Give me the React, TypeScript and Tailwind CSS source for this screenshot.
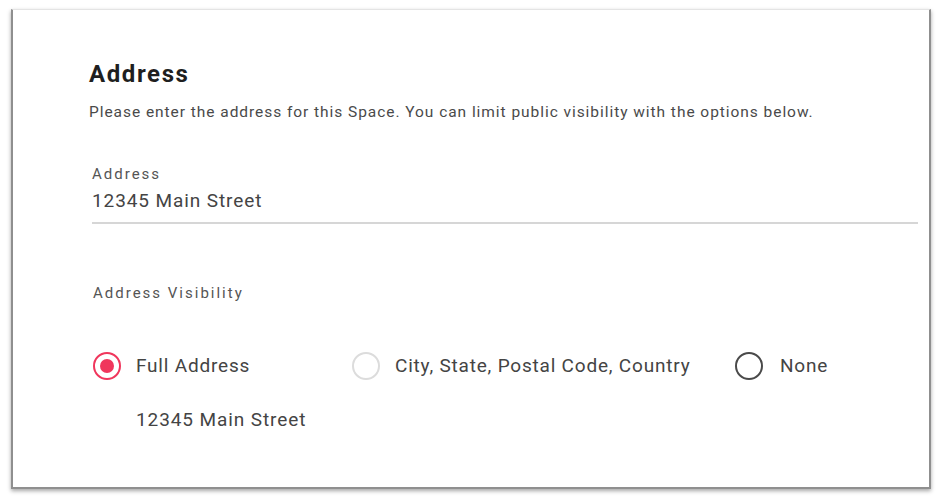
import React from "react";

type Option = { id: string; label: string; state: "checked" | "disabled" | "off" };

const options: Option[] = [
  { id: "full", label: "Full Address", state: "checked" },
  { id: "city", label: "City, State, Postal Code, Country", state: "disabled" },
  { id: "none", label: "None", state: "off" },
];

function Radio({ state }: { state: Option["state"] }) {
  if (state === "checked") {
    return (
      <span className="flex h-[28px] w-[28px] items-center justify-center rounded-full border-2 border-[#f0365c]">
        <span className="h-[14px] w-[14px] rounded-full bg-[#f0365c]" />
      </span>
    );
  }
  if (state === "disabled") {
    return <span className="block h-[28px] w-[28px] rounded-full border-2 border-[#dcdcdc]" />;
  }
  return <span className="block h-[28px] w-[28px] rounded-full border-2 border-[#4a4a4a]" />;
}

export default function App() {
  return (
    <div className="h-[504px] w-[944px] bg-white font-['Roboto',sans-serif] pl-[11px] pt-[9px]">
      {/* Card */}
      <div className="h-[480px] w-[920px] border-x-2 border-b-2 border-t border-[#8f8f8f] border-t-[#e4e4e4] bg-white shadow-[0_2px_4px_rgba(0,0,0,0.35)]">
        <div className="pl-[76px] pr-[11px] pt-[50px]">
          <h1 className="text-[24px] font-bold leading-[28px] tracking-[1.6px] text-[#1f1f1f]">Address</h1>
          <p className="mt-[14px] text-[15.5px] leading-[20px] tracking-[0.95px] text-[#4a4a4a]">
            Please enter the address for this Space. You can limit public visibility with the options below.
          </p>

          {/* Address field */}
          <div className="ml-[3px] mt-[43px] border-b-2 border-[#d6d6d6] pb-[9px]">
            <div className="text-[15px] leading-[18px] tracking-[2px] text-[#555]">Address</div>
            <div className="mt-[6px] text-[19px] leading-[24px] tracking-[0.9px] text-[#444]">12345 Main Street</div>
          </div>

          {/* Visibility */}
          <div className="ml-[4px] mt-[59px] text-[15px] leading-[20px] tracking-[2px] text-[#555]">
            Address Visibility
          </div>

          <div className="ml-[4px] mt-[49px] flex items-center">
            {options.map((o) => (
              <label
                key={o.id}
                className={
                  o.id === "full"
                    ? "flex w-[259px] items-center gap-[15px]"
                    : o.id === "city"
                    ? "flex w-[383px] items-center gap-[15px]"
                    : "flex items-center gap-[17px]"
                }
              >
                <Radio state={o.state} />
                <span className="text-[19px] leading-[24px] tracking-[0.8px] text-[#444]">{o.label}</span>
              </label>
            ))}
          </div>

          <div className="ml-[47px] mt-[28px] text-[19px] leading-[24px] tracking-[0.9px] text-[#444]">12345 Main Street</div>
        </div>
      </div>
    </div>
  );
}
